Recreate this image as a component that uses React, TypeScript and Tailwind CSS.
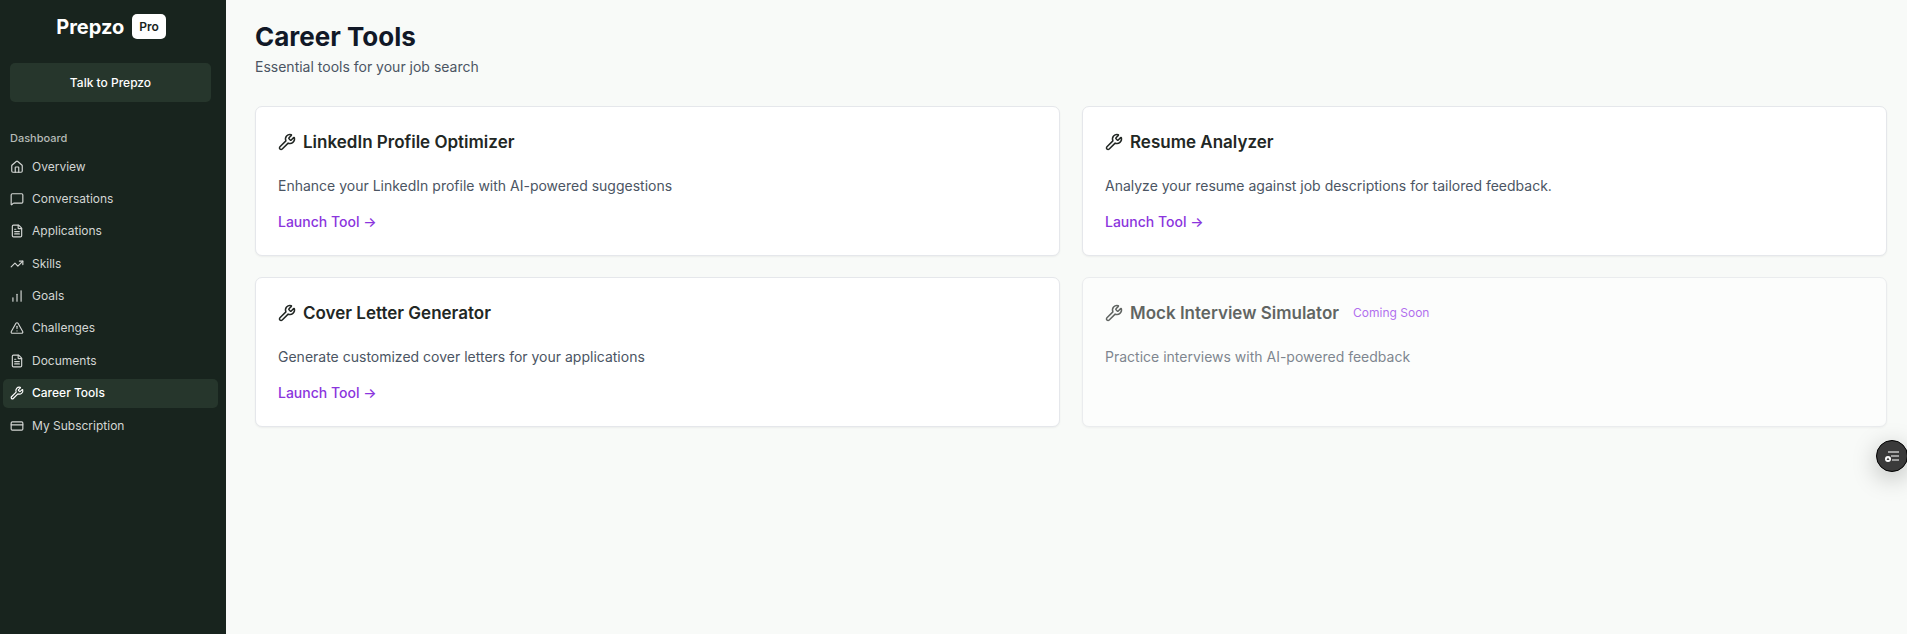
import {
  ChartNoAxesColumnIncreasing,
  CreditCard,
  FileText,
  House,
  MessageSquare,
  TrendingUp,
  TriangleAlert,
  Wrench,
} from 'lucide-react'

const navItems = [
  { label: 'Overview', icon: House },
  { label: 'Conversations', icon: MessageSquare },
  { label: 'Applications', icon: FileText },
  { label: 'Skills', icon: TrendingUp },
  { label: 'Goals', icon: ChartNoAxesColumnIncreasing },
  { label: 'Challenges', icon: TriangleAlert },
  { label: 'Documents', icon: FileText },
  { label: 'Career Tools', icon: Wrench, active: true },
  { label: 'My Subscription', icon: CreditCard },
]

const tools = [
  {
    title: 'LinkedIn Profile Optimizer',
    description: 'Enhance your LinkedIn profile with AI-powered suggestions',
  },
  {
    title: 'Resume Analyzer',
    description: 'Analyze your resume against job descriptions for tailored feedback.',
  },
  {
    title: 'Cover Letter Generator',
    description: 'Generate customized cover letters for your applications',
  },
  {
    title: 'Mock Interview Simulator',
    description: 'Practice interviews with AI-powered feedback',
    comingSoon: true,
  },
]

function Sidebar() {
  return (
    <aside className="w-[226px] shrink-0 bg-[#18241e] text-white">
      <div className="flex items-center justify-center gap-2 pt-3.5 pr-1">
        <span className="text-xl leading-6 font-bold">Prepzo</span>
        <span className="rounded-[5px] bg-white px-[7px] text-[12px] leading-[25px] font-semibold text-[#18241e]">
          Pro
        </span>
      </div>

      <div className="pt-6 pr-[15px] pl-2.5">
        <button
          type="button"
          className="h-[39px] w-full rounded-[5px] bg-[#26362c] text-[12px] font-medium"
        >
          Talk to Prepzo
        </button>
      </div>

      <h2 className="mt-[26px] px-2.5 text-[11px] leading-5 font-medium text-[#b5bab7]">Dashboard</h2>
      <nav className="mt-1 flex h-72 flex-col justify-between pr-2 pl-[3px]">
        {navItems.map(({ label, icon: Icon, active }) => (
          <a
            key={label}
            href="#"
            className={`flex h-[29px] items-center gap-2 rounded-[5px] px-[7px] text-[12px] ${
              active ? 'bg-[#26362c] font-medium text-white' : 'text-[#d3d6d4]'
            }`}
          >
            <Icon className="size-3.5" />
            {label}
          </a>
        ))}
      </nav>
    </aside>
  )
}

function ToolCard({ title, description, comingSoon }: (typeof tools)[number]) {
  return (
    <div
      className={`h-[150px] rounded-[7px] border border-[#e5e7eb] bg-white p-[22px] shadow-xs ${
        comingSoon ? 'opacity-70' : ''
      }`}
    >
      <div className="flex items-center">
        <Wrench className="size-[18px] text-[#222724]" />
        <h2 className="ml-[7px] text-[17px] leading-[26px] font-semibold text-[#222724]">{title}</h2>
        {comingSoon && <span className="ml-3.5 text-[12px] text-[#9333ea]">Coming Soon</span>}
      </div>
      <p className="mt-5 text-sm leading-[22px] text-[#4b5563]">{description}</p>
      {!comingSoon && (
        <a href="#" className="mt-3.5 inline-block text-sm leading-[22px] font-medium text-[#8b35dd]">
          Launch Tool →
        </a>
      )}
    </div>
  )
}

export default function App() {
  return (
    <div className="flex min-h-screen bg-[#f8faf8] font-['Inter',sans-serif]">
      <Sidebar />
      <main className="flex-1 pt-[21px] pr-5 pl-[29px]">
        <h1 className="text-[26px] leading-8 font-bold text-[#111827]">Career Tools</h1>
        <p className="mt-[3px] text-sm leading-[22px] text-[#4b5563]">Essential tools for your job search</p>
        <div className="mt-7 grid grid-cols-2 gap-x-[22px] gap-y-[21px]">
          {tools.map((tool) => (
            <ToolCard key={tool.title} {...tool} />
          ))}
        </div>
      </main>

      <button
        type="button"
        aria-label="Open panel"
        className="fixed top-[440px] -right-px flex size-8 items-center justify-center rounded-full border border-black bg-[#3a3a3a] shadow-[0_6px_24px_rgba(0,0,0,0.25)]"
      >
        <svg viewBox="0 0 16 12" className="w-4" fill="none">
          <path d="M4 2h11" stroke="#a3a3a3" strokeWidth="2" />
          <path d="M7 6h8M8 10h7" stroke="#fff" strokeWidth="1.2" />
          <circle cx="4" cy="9" r="3" fill="#fff" />
          <path d="M4 7.5l1.5 2.5h-3z" fill="#3a3a3a" />
        </svg>
      </button>
    </div>
  )
}
